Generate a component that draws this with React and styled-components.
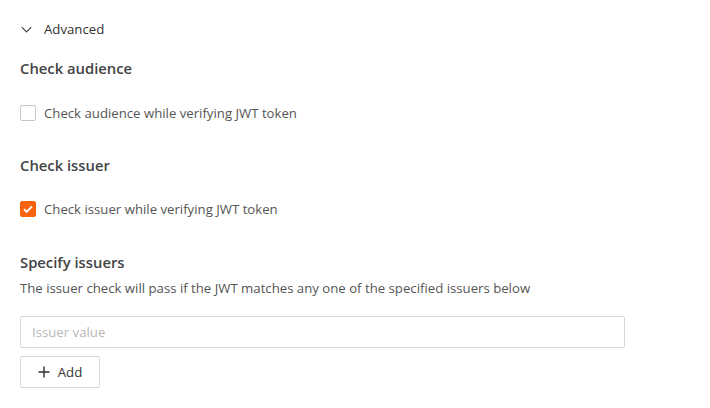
import React from 'react'
import styled, { createGlobalStyle } from 'styled-components'

const Global = createGlobalStyle`
  body {
    margin: 0;
    background: #fff;
    font-family: 'Open Sans', 'Noto Sans', sans-serif;
    color: #323130;
  }
`

// #region Styled Components
const Page = styled.div`
  padding: 18px 20px 0;
  display: flex;
  flex-direction: column;
`

const Toggle = styled.div`
  display: flex;
  align-items: center;
  gap: 12px;
  height: 22px;
  font-size: 13.2px;
  color: #323130;
  svg {
    margin-left: 1px;
  }
`

const Heading = styled.h3`
  margin: ${(p) => p.$top || 0}px 0 0;
  font-size: 14.8px;
  font-weight: 600;
  line-height: 22px;
  color: #444;
`

const CheckRow = styled.label`
  display: flex;
  align-items: center;
  gap: 8px;
  margin-top: ${(p) => p.$top || 0}px;
  font-size: 13.2px;
  line-height: 18px;
  color: #555;
`

const Box = styled.span`
  width: 16px;
  height: 16px;
  box-sizing: border-box;
  border-radius: 2px;
  border: 1px solid ${(p) => (p.$checked ? '#f7630c' : '#c8c6c4')};
  background: ${(p) => (p.$checked ? '#f7630c' : '#fff')};
  display: flex;
  align-items: center;
  justify-content: center;
`

const Hint = styled.p`
  margin: 6px 0 0;
  font-size: 13.2px;
  line-height: 18px;
  color: #555;
`

const Input = styled.input`
  margin-top: 19px;
  width: 605px;
  height: 32px;
  box-sizing: border-box;
  border: 1px solid #d6d6d6;
  border-radius: 2px;
  padding: 0 11px;
  font-family: inherit;
  font-size: 13.2px;
  outline: none;
  &::placeholder {
    color: #b8b8b8;
  }
`

const Button = styled.button`
  margin-top: 8px;
  align-self: flex-start;
  width: 80px;
  height: 32px;
  box-sizing: border-box;
  display: flex;
  align-items: center;
  justify-content: center;
  gap: 8px;
  border: 1px solid #d6d6d6;
  border-radius: 2px;
  background: #fff;
  font-family: inherit;
  font-size: 13.2px;
  color: #323130;
  padding: 0;
`
// #endregion

const Chevron = () => (
  <svg width="11" height="11" viewBox="0 0 11 11">
    <path d="M0.8 3.2l4.7 4.7 4.7-4.7" fill="none" stroke="#444" strokeWidth="1.1" />
  </svg>
)

const Tick = () => (
  <svg width="12" height="12" viewBox="0 0 12 12">
    <path d="M2 6.2l2.7 2.6 5.3-5.4" fill="none" stroke="#fff" strokeWidth="1.9" />
  </svg>
)

const Plus = () => (
  <svg width="12" height="12" viewBox="0 0 12 12">
    <path d="M6 0.5v11M0.5 6h11" stroke="#323130" strokeWidth="1.4" />
  </svg>
)

const App = () => {
  return (
    <Page>
      <Global />
      <Toggle>
        <Chevron />
        Advanced
      </Toggle>

      <Heading $top={17}>Check audience</Heading>
      <CheckRow $top={25}>
        <Box />
        Check audience while verifying JWT token
      </CheckRow>

      <Heading $top={32}>Check issuer</Heading>
      <CheckRow $top={24}>
        <Box $checked>
          <Tick />
        </Box>
        Check issuer while verifying JWT token
      </CheckRow>

      <Heading $top={33}>Specify issuers</Heading>
      <Hint>
        The issuer check will pass if the JWT matches any one of the specified
        issuers below
      </Hint>

      <Input placeholder="Issuer value" />
      <Button>
        <Plus />
        Add
      </Button>
    </Page>
  )
}

export default App
